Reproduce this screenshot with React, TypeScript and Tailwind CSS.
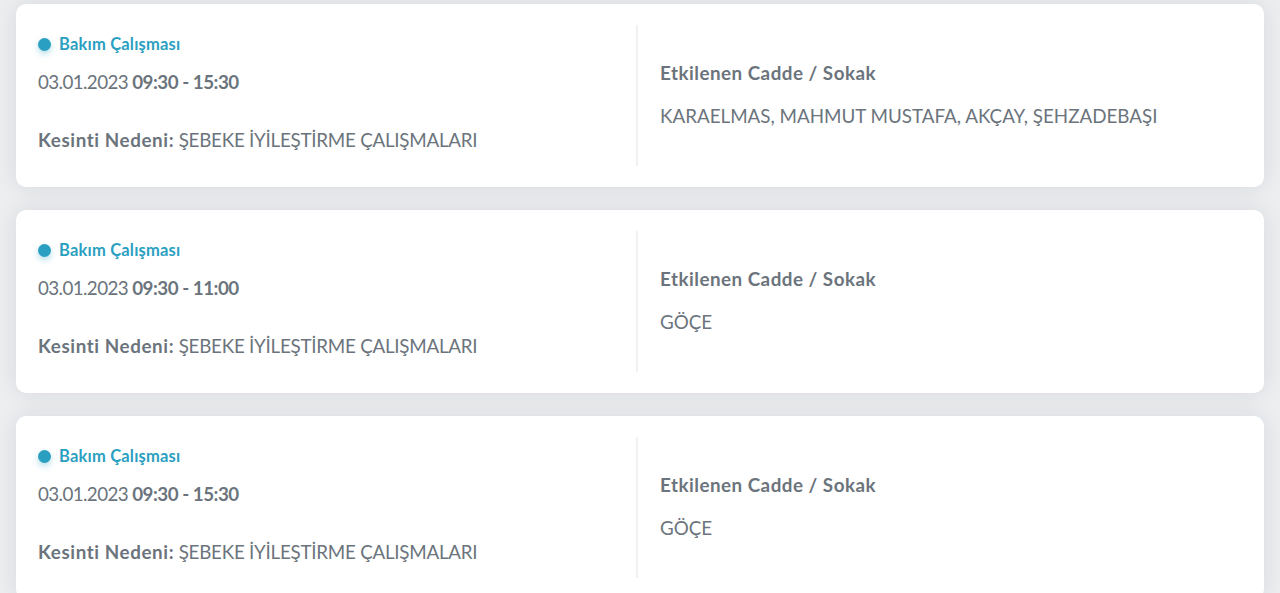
const items = [
  { time: "09:30 - 15:30", streets: "KARAELMAS, MAHMUT MUSTAFA, AKÇAY, ŞEHZADEBAŞI" },
  { time: "09:30 - 11:00", streets: "GÖÇE" },
  { time: "09:30 - 15:30", streets: "GÖÇE" },
];

function OutageCard({ time, streets }: { time: string; streets: string }) {
  return (
    <div className="bg-white rounded-[10px] shadow-[0_0_22px_rgba(30,40,50,0.10)] h-[183px] flex items-center px-[22px]">
      <div className="w-[600px] h-[141px] border-r-2 border-[#f0f1f2] flex flex-col pt-[7px]">
        <div className="flex items-center gap-2 text-[16.5px] font-bold tracking-[0.2px] text-[#2a9fc1]">
          <span className="w-[13px] h-[13px] rounded-full bg-[#2a9fc1] shadow-[0_3px_6px_rgba(42,159,193,0.35)]" />
          Bakım Çalışması
        </div>
        <div className="mt-[11px] text-[18.8px] tracking-[-0.6px] text-[#6b747c]">
          03.01.2023 <span className="font-bold tracking-[-0.5px]">{time}</span>
        </div>
        <div className="mt-[30px] text-[18.8px] tracking-[-0.25px] text-[#6b747c]">
          <span className="font-bold tracking-[0.6px]">Kesinti Nedeni:</span> ŞEBEKE İYİLEŞTİRME ÇALIŞMALARI
        </div>
      </div>
      <div className="flex-1 pl-[22px] pb-[2px] flex flex-col">
        <div className="text-[18.8px] font-bold tracking-[0.5px] text-[#6b747c]">Etkilenen Cadde / Sokak</div>
        <div className="mt-[14px] text-[18.8px] text-[#6b747c]">{streets}</div>
      </div>
    </div>
  );
}

export default function App() {
  return (
    <div
      className="min-h-[593px] bg-[#eceef0] px-4 pt-1 flex flex-col gap-[23px]"
      style={{ fontFamily: "Lato, 'Noto Sans', sans-serif" }}
    >
      {items.map((it, i) => (
        <OutageCard key={i} time={it.time} streets={it.streets} />
      ))}
    </div>
  );
}
